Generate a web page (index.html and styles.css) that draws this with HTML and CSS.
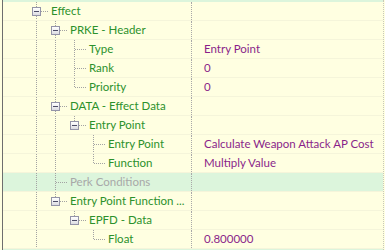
FILE: index.html
```html
<!DOCTYPE html>
<html lang="en">

<head>
  <meta charset="UTF-8">
  <title>Record Tree</title>
  <link rel="stylesheet" href="styles.css">
</head>

<body>
  <div class="tree">
    <div class="edge"></div>

    <div class="row">
      <div class="name"><i class="c bf"><b></b></i><span>Effect</span></div>
      <div class="val"></div>
    </div>
    <div class="row">
      <div class="name"><i class="g"></i><i class="c bf"><b></b></i><span>PRKE - Header</span></div>
      <div class="val"></div>
    </div>
    <div class="row">
      <div class="name"><i class="g"></i><i class="g"></i><i class="c lf"></i><span>Type</span></div>
      <div class="val">Entry Point</div>
    </div>
    <div class="row">
      <div class="name"><i class="g"></i><i class="g"></i><i class="c lf"></i><span>Rank</span></div>
      <div class="val">0</div>
    </div>
    <div class="row">
      <div class="name"><i class="g"></i><i class="g"></i><i class="c ll"></i><span>Priority</span></div>
      <div class="val">0</div>
    </div>
    <div class="row">
      <div class="name"><i class="g"></i><i class="c bf"><b></b></i><span>DATA - Effect Data</span></div>
      <div class="val"></div>
    </div>
    <div class="row">
      <div class="name"><i class="g"></i><i class="g"></i><i class="c bl"><b></b></i><span>Entry Point</span></div>
      <div class="val"></div>
    </div>
    <div class="row">
      <div class="name"><i class="g"></i><i class="g"></i><i></i><i class="c lf"></i><span>Entry Point</span></div>
      <div class="val">Calculate Weapon Attack AP Cost</div>
    </div>
    <div class="row">
      <div class="name"><i class="g"></i><i class="g"></i><i></i><i class="c ll"></i><span>Function</span></div>
      <div class="val">Multiply Value</div>
    </div>
    <div class="row selected">
      <div class="name"><i class="g"></i><i class="c lf"></i><span class="muted">Perk Conditions</span></div>
      <div class="val"></div>
    </div>
    <div class="row">
      <div class="name"><i class="g"></i><i class="c bl"><b></b></i><span>Entry Point Function ...</span></div>
      <div class="val"></div>
    </div>
    <div class="row">
      <div class="name"><i class="g"></i><i></i><i class="c bl"><b></b></i><span>EPFD - Data</span></div>
      <div class="val"></div>
    </div>
    <div class="row">
      <div class="name"><i class="g"></i><i></i><i></i><i class="c ll"></i><span>Float</span></div>
      <div class="val">0.800000</div>
    </div>

    <div class="edge"></div>
  </div>
</body>

</html>
```

FILE: styles.css
```css
* {
  box-sizing: border-box;
  margin: 0;
  padding: 0
}

:root {
  --bg: #ffffe1;
  --line: #f5f5da;
  --sel: #dcf5dc;
  --dots: #a3a3a3;
  --green: #2c912c;
  --purple: #8a1f8a;
  --muted: #a8a8a8
}

body {
  background: var(--bg);
  padding-left: 2px;
  font-family: Lato, "Noto Sans", sans-serif;
  font-size: 11.5px;
  overflow: hidden
}

.tree {
  border-left: 1px solid #6e6e6e;
  border-right: 1px dotted #c8c8b8;
  width: 382px;
  height: 250px
}

.edge {
  height: 2px;
  background: var(--sel)
}

.edge:last-child {
  height: 1px
}

.row {
  display: flex;
  height: 19px;
  border-bottom: 1px solid var(--line)
}

.row.selected {
  background: var(--sel)
}

.name {
  width: 188px;
  display: flex;
  padding-left: 24px;
  color: var(--green);
  white-space: nowrap;
  overflow: hidden
}

.name i {
  display: block;
  flex: none;
  width: 19px;
  height: 18px
}

.name span {
  line-height: 18px;
  margin-left: 2px
}

.name .muted {
  color: var(--muted)
}

/* vertical guide of an ancestor level */
.name .g {
  background: repeating-linear-gradient(to bottom, var(--dots) 0 1px, transparent 1px 2px) 9px 0 / 1px 100% no-repeat
}

/* node cell: line down + connector to the label */
.name .c {
  width: 22px
}

.name .lf,
.name .bf {
  background:
    repeating-linear-gradient(to right, var(--dots) 0 1px, transparent 1px 2px) 10px 9px / 11px 1px no-repeat,
    repeating-linear-gradient(to bottom, var(--dots) 0 1px, transparent 1px 2px) 9px 0 / 1px 100% no-repeat
}

.name .ll,
.name .bl {
  background:
    repeating-linear-gradient(to right, var(--dots) 0 1px, transparent 1px 2px) 10px 9px / 11px 1px no-repeat,
    repeating-linear-gradient(to bottom, var(--dots) 0 1px, transparent 1px 2px) 9px 0 / 1px 9px no-repeat
}

/* expander box with minus sign */
.name .c b {
  display: block;
  width: 9px;
  height: 9px;
  margin: 5px 0 0 5px;
  border: 1px solid #9494a8;
  background:
    linear-gradient(#4c4c66, #4c4c66) 1px 3px / 5px 1px no-repeat,
    linear-gradient(#ffffff, #dcdce2)
}

.val {
  flex: 1;
  border-left: 1px dotted #a8a8a8;
  padding-left: 12px;
  line-height: 18px;
  color: var(--purple);
  white-space: nowrap
}
```
